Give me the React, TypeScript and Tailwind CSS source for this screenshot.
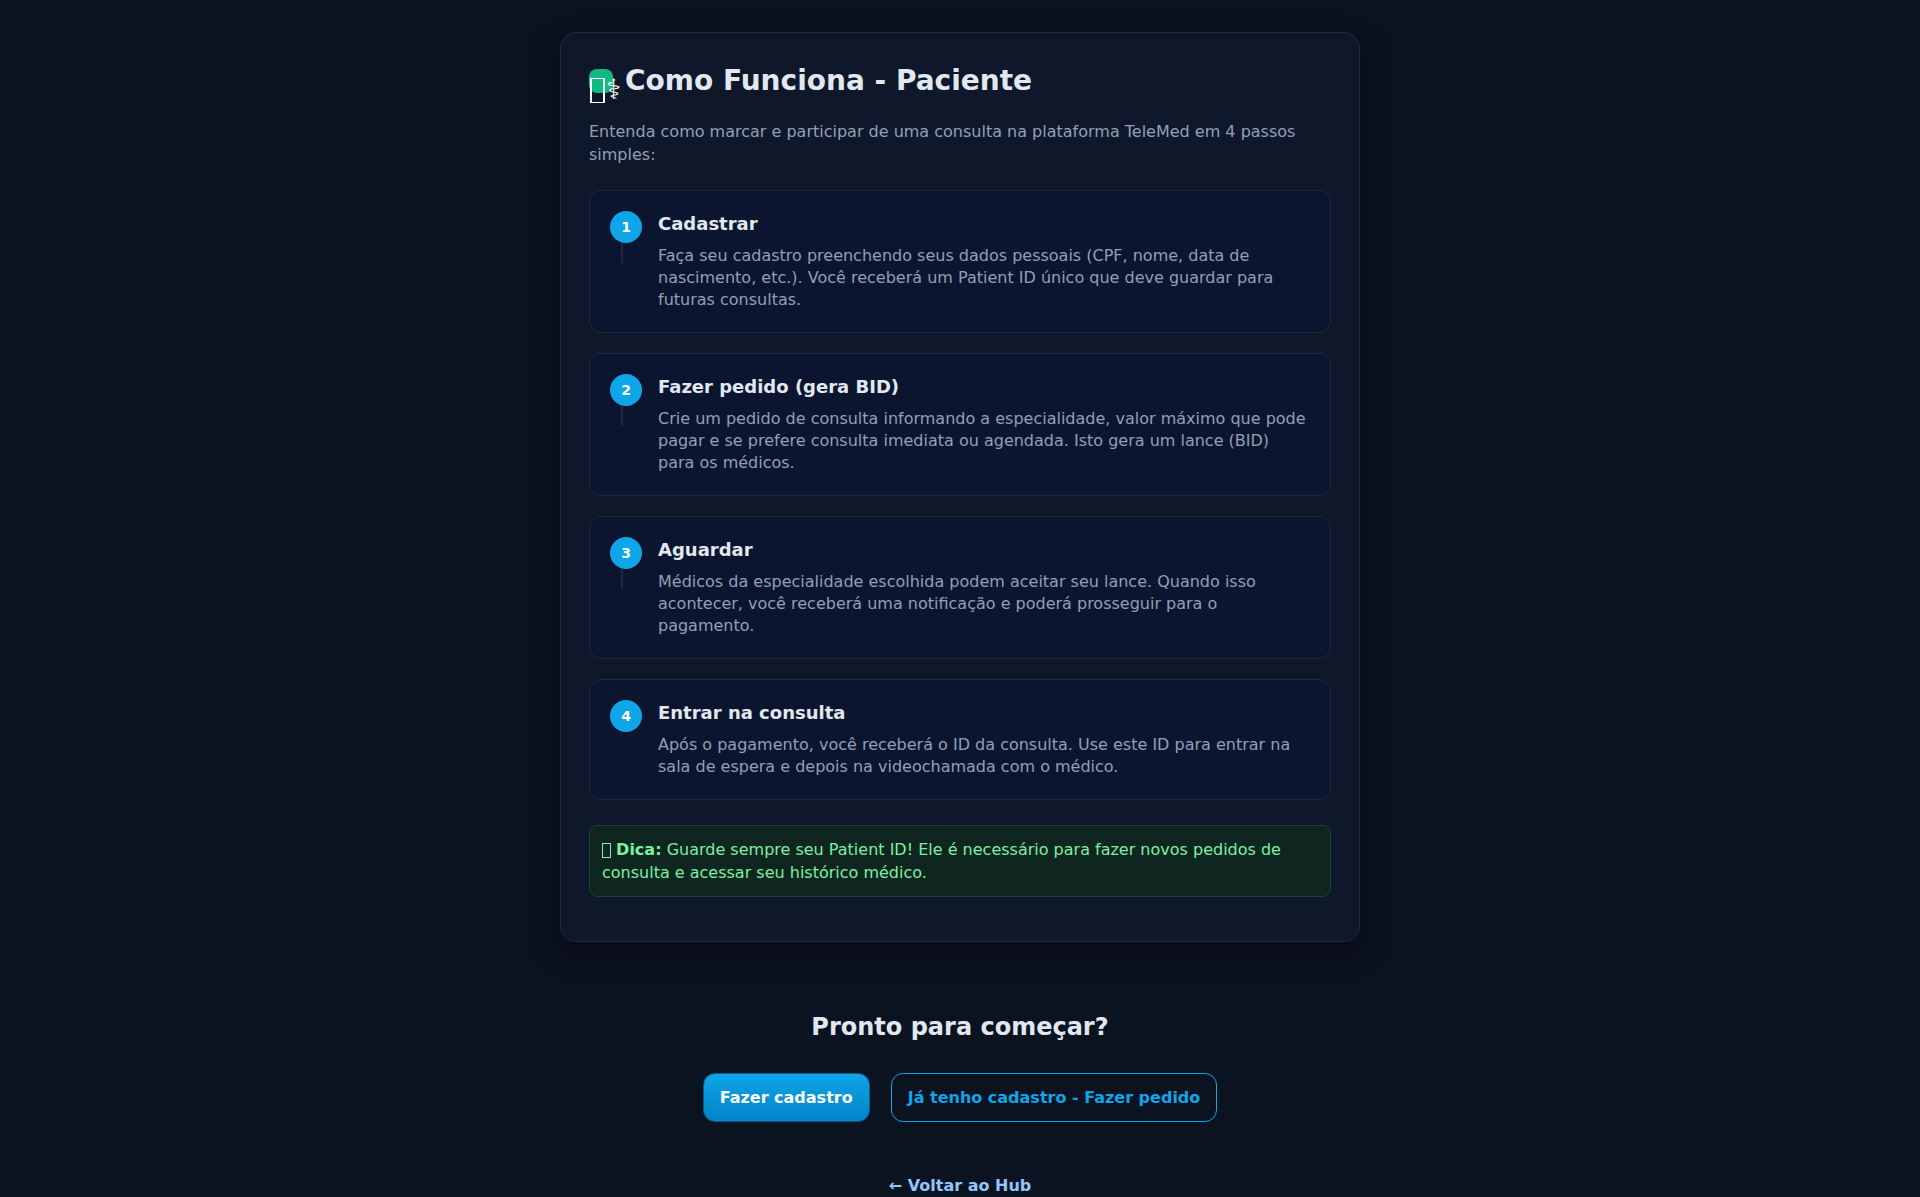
const steps = [
  {
    title: "Cadastrar",
    text: "Faça seu cadastro preenchendo seus dados pessoais (CPF, nome, data de nascimento, etc.). Você receberá um Patient ID único que deve guardar para futuras consultas.",
  },
  {
    title: "Fazer pedido (gera BID)",
    text: "Crie um pedido de consulta informando a especialidade, valor máximo que pode pagar e se prefere consulta imediata ou agendada. Isto gera um lance (BID) para os médicos.",
  },
  {
    title: "Aguardar",
    text: "Médicos da especialidade escolhida podem aceitar seu lance. Quando isso acontecer, você receberá uma notificação e poderá prosseguir para o pagamento.",
  },
  {
    title: "Entrar na consulta",
    text: "Após o pagamento, você receberá o ID da consulta. Use este ID para entrar na sala de espera e depois na videochamada com o médico.",
  },
];

function Step({ number, title, text, last }: { number: number; title: string; text: string; last: boolean }) {
  return (
    <li className="flex gap-4 rounded-xl border border-[#1f2937] bg-[#0b1530] p-5">
      <div className="relative size-8 shrink-0">
        <span className="flex size-8 items-center justify-center rounded-full bg-[#0ea5e9] text-sm font-bold text-white">
          {number}
        </span>
        {!last && <span className="absolute left-[11px] top-8 h-5 w-0.5 bg-[#1f2937]" />}
      </div>
      <div className="flex-1">
        <h3 className="mb-2 text-lg leading-[26px] font-bold text-[#e2e8f0]">{title}</h3>
        <p className="mb-px leading-[22px] text-[#90a0b7]">{text}</p>
      </div>
    </li>
  );
}

export default function App() {
  return (
    <div className="min-h-screen bg-[#0b1220] px-4 py-8 font-['DejaVu_Sans',sans-serif] text-base text-[#e2e8f0]">
      <main className="mx-auto max-w-[800px]">
        <section className="rounded-2xl border border-[#1f2937] bg-[#0f172a] px-7 pt-7 pb-11 shadow-[0_10px_30px_rgba(0,0,0,0.35)]">
          <h1 className="mb-4 flex h-[43px] gap-3 text-[28px] leading-10 font-bold">
            <span className="relative mt-2 size-6 shrink-0 rounded-lg bg-[#10b981] font-normal">
              <span className="absolute left-px top-[9px] flex items-start gap-px">
                <span className="h-[25px] w-[15px] shrink-0 border-x-2 border-y border-white" />
                <span className="-mt-2 leading-10 text-white">{"\u2695\uFE0E"}</span>
              </span>
            </span>
            Como Funciona - Paciente
          </h1>
          <p className="mb-6 leading-[23px] text-[#90a0b7]">
            Entenda como marcar e participar de uma consulta na plataforma TeleMed em 4 passos simples:
          </p>
          <ol className="flex flex-col gap-5">
            {steps.map((step, i) => (
              <Step key={step.title} number={i + 1} title={step.title} text={step.text} last={i === steps.length - 1} />
            ))}
          </ol>
          <p className="mt-[25px] rounded-lg border border-[#1b4034] bg-[#0f2620] p-3 leading-[23px] text-[#7cf0a2]">
            <span className="inline-block h-[15px] w-[9px] border border-[#7cf0a2] align-[-3px]" />{" "}
            <strong>Dica:</strong> Guarde sempre seu Patient ID! Ele é necessário para fazer novos pedidos de consulta
            e acessar seu histórico médico.
          </p>
        </section>

        <section className="mt-[68px] flex flex-col items-center">
          <h2 className="mb-7 text-2xl leading-[35px] font-bold">Pronto para começar?</h2>
          <div className="flex flex-wrap justify-center gap-[21px]">
            <a
              href="#cadastro"
              className="rounded-xl border border-[#0b5c8a] bg-linear-to-b from-[#0ea5e9] to-[#0284c7] px-4 py-3 leading-[23px] font-semibold text-white"
            >
              Fazer cadastro
            </a>
            <a
              href="#pedido"
              className="rounded-xl border border-[#0ea5e9] px-4 py-3 leading-[23px] font-semibold text-[#0ea5e9]"
            >
              Já tenho cadastro - Fazer pedido
            </a>
          </div>
          <a href="#hub" className="mt-[52px] leading-[23px] font-semibold text-[#93c5fd]">
            ← Voltar ao Hub
          </a>
        </section>
      </main>
    </div>
  );
}
